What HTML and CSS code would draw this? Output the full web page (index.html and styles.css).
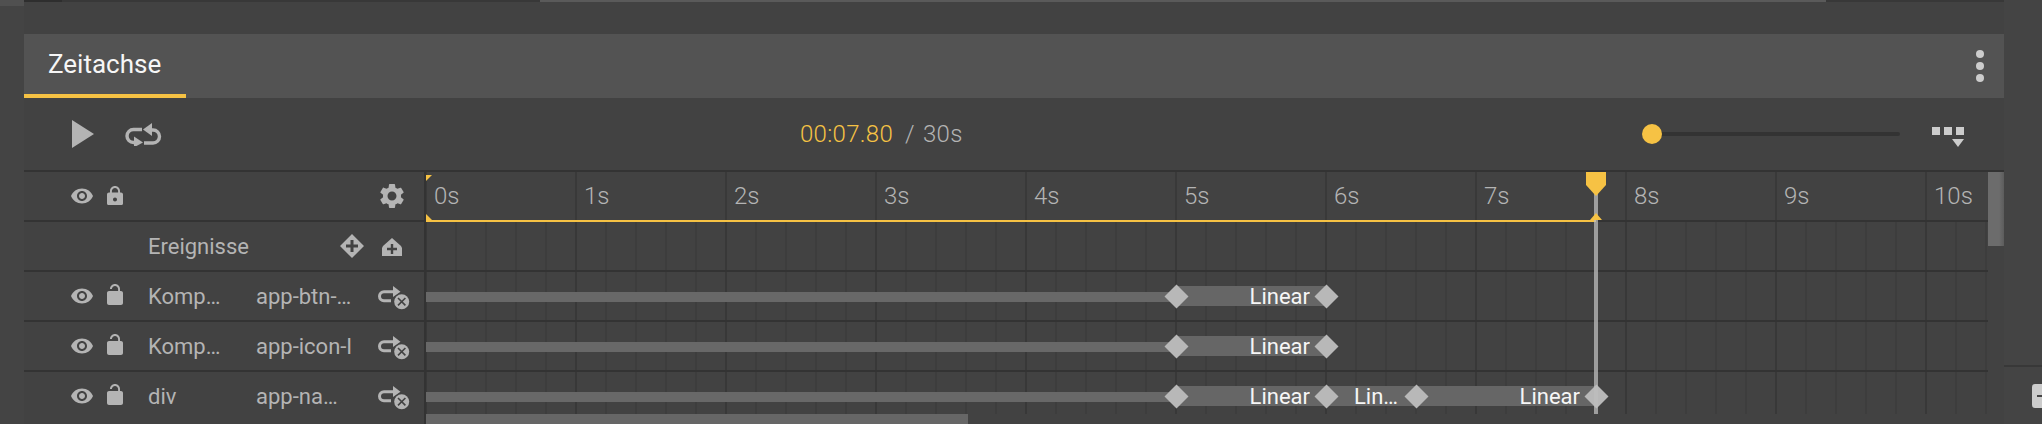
FILE: index.html
```html
<!DOCTYPE html>
<html lang="de">
<head>
  <meta charset="UTF-8" />
  <meta name="viewport" content="width=device-width, initial-scale=1.0" />
  <title>Zeitachse</title>
  <link rel="stylesheet" href="styles.css">
</head>
<body>
  <svg class="defs" width="0" height="0">
    <symbol id="i-eye" viewBox="0 0 24 24"><path d="M12 4.5C7 4.5 2.73 7.61 1 12c1.73 4.39 6 7.5 11 7.5s9.27-3.11 11-7.5c-1.73-4.39-6-7.5-11-7.5zM12 17c-2.76 0-5-2.24-5-5s2.24-5 5-5 5 2.24 5 5-2.24 5-5 5zm0-8c-1.66 0-3 1.34-3 3s1.34 3 3 3 3-1.34 3-3-1.34-3-3-3z"/></symbol>
    <symbol id="i-lock" viewBox="0 0 24 24"><path d="M18 9.500h-1V8c0-2.76-2.24-5-5-5S7 5.240 7 8v1.500H6c-1.1 0-2 .9-2 2v9c0 1.1.9 1.500 2 1.500h12c1.100 0 2-.4 2-1.500v-9c0-1.100-.9-2-2-2zm-6 9c-1.100 0-2-.9-2-2s.9-2 2-2 2 .9 2 2-.9 2-2 2zm3.100-9H8.900V8c0-1.710 1.390-3.100 3.100-3.100 1.710 0 3.100 1.390 3.100 3.100v1.500z"/></symbol>
    <symbol id="i-unlock" viewBox="0 0 24 24"><path d="M12 17c1.100 0 2-.9 2-2s-.9-2-2-2-2 .9-2 2 .9 2 2 2zm6-9h-1V6c0-2.760-2.240-5-5-5S7 3.240 7 6h1.900c0-1.710 1.390-3.100 3.100-3.100 1.710 0 3.100 1.390 3.100 3.100v2H6c-1.100 0-2 .9-2 2v10c0 1.100.9 2 2 2h12c1.100 0 2-.9 2-2V10c0-1.100-.9-2-2-2z"/></symbol>
    <symbol id="i-remove" viewBox="0 0 34 26">
      <path d="M18 6.700H8a4.500 4.500 0 0 0 0 9h7" fill="none" stroke="currentColor" stroke-width="3"/>
      <path d="M17 1l7.500 5.700-7.500 5.300z"/>
      <circle cx="25.700" cy="16.700" r="8.500" fill="#424242"/>
      <circle cx="25.700" cy="16.700" r="7.500"/>
      <path d="M22 13l7.400 7.400M29.400 13L22 20.400" stroke="#424242" stroke-width="1.600"/>
    </symbol>
  </svg>

  <div class="page">
    <div class="gutter gutter-left"></div>

    <main class="panel">
      <div class="topbar">
        <span class="topbar-start"></span>
        <span class="topbar-thumb"></span>
      </div>

      <header class="tabs">
        <div class="tab">Zeitachse</div>
        <div class="dots"><i></i><i></i><i></i></div>
      </header>

      <div class="toolbar">
        <svg class="play" viewBox="0 0 22 28"><path d="M0 0l22 14L0 28z"/></svg>
        <svg class="loop" viewBox="0 0 38 25">
          <path d="M18 7.500H9.500a6.500 6.500 0 0 0 0 13H11" fill="none" stroke="currentColor" stroke-width="3.400"/>
          <path d="M10 14.500l9 6-6.500 3.500-2.500 0z"/>
          <path d="M20 21h9a6.500 6.500 0 0 0 0-13h-2" fill="none" stroke="currentColor" stroke-width="3.400"/>
          <path d="M28 1l-9 6.500 9 6.500z"/>
        </svg>
        <div class="time">
          <span class="time-now">00:07.80</span>
          <span class="time-sep">/</span>
          <span class="time-total">30s</span>
        </div>
        <div class="zoom-slider"><span class="zoom-thumb"></span></div>
        <svg class="view-menu" viewBox="0 0 32 20">
          <path d="M0 0h8v8H0zM12 0h8v8h-8zM24 0h8v8h-8zM20 12h12l-6 8z"/>
        </svg>
      </div>

      <div class="table">
        <div class="rows">
          <div class="row">
            <div class="side">
              <svg class="ic-eye"><use href="#i-eye"/></svg>
              <svg class="ic-lock"><use href="#i-lock"/></svg>
              <svg class="ic-gear" viewBox="0 0 24 24"><path d="M19.140 12.940c.04-.3.06-.61.06-.94 0-.32-.02-.64-.07-.94l2.030-1.580c.18-.14.23-.41.12-.61l-1.920-3.320c-.12-.22-.37-.29-.59-.22l-2.390.96c-.5-.38-1.030-.7-1.620-.94l-.36-2.540c-.04-.24-.24-.41-.48-.41h-3.840c-.24 0-.43.17-.47.41l-.36 2.540c-.59.24-1.130.57-1.620.94l-2.390-.96c-.22-.08-.47 0-.59.22L2.740 8.870c-.12.21-.08.47.12.61l2.030 1.580c-.05.3-.09.63-.09.94s.02.64.07.94l-2.030 1.580c-.18.14-.23.41-.12.61l1.920 3.320c.12.22.37.29.59.22l2.390-.96c.5.38 1.030.7 1.620.94l.36 2.540c.05.24.24.41.48.41h3.840c.24 0 .44-.17.47-.41l.36-2.540c.59-.24 1.130-.56 1.620-.94l2.390.96c.22.08.47 0 .59-.22l1.920-3.320c.12-.22.07-.47-.12-.61l-2.010-1.580zM12 15.600c-1.980 0-3.600-1.620-3.600-3.600s1.620-3.600 3.600-3.600 3.600 1.620 3.600 3.600-1.620 3.600-3.600 3.600z"/></svg>
            </div>
            <div class="ruler">
              <span>0s</span><span>1s</span><span>2s</span><span>3s</span><span>4s</span><span>5s</span><span>6s</span><span>7s</span><span>8s</span><span>9s</span><span>10s</span>
            </div>
          </div>

          <div class="row">
            <div class="side side-events">
              <span class="events-label">Ereignisse</span>
              <svg class="ic-add-key" viewBox="0 0 24 24"><path fill-rule="evenodd" d="M12 0l12 12-12 12L0 12zM10.500 6v4.500H6v3h4.500V18h3v-4.500H18v-3h-4.500V6z"/></svg>
              <svg class="ic-add-event" viewBox="0 0 20 18"><path fill-rule="evenodd" d="M10 0l9 8 1 2v8H0v-8l1-2zM8.800 6v3.800H5v2.400h3.800V16h2.400v-3.800H15V9.800h-3.800V6z"/></svg>
            </div>
            <div class="lane"></div>
          </div>

          <div class="row">
            <div class="side">
              <svg class="ic-eye"><use href="#i-eye"/></svg>
              <svg class="ic-lock"><use href="#i-unlock"/></svg>
              <span class="name">Komponente</span>
              <span class="sel">app-btn-primary</span>
              <svg class="ic-remove"><use href="#i-remove"/></svg>
            </div>
            <div class="lane">
              <div class="hold"></div>
              <div class="seg" style="left:750px;width:150px"><span>Linear</span></div>
              <i class="key" style="left:750px"></i>
              <i class="key" style="left:900px"></i>
            </div>
          </div>

          <div class="row">
            <div class="side">
              <svg class="ic-eye"><use href="#i-eye"/></svg>
              <svg class="ic-lock"><use href="#i-unlock"/></svg>
              <span class="name">Komponente</span>
              <span class="sel">app-icon-l</span>
              <svg class="ic-remove"><use href="#i-remove"/></svg>
            </div>
            <div class="lane">
              <div class="hold"></div>
              <div class="seg" style="left:750px;width:150px"><span>Linear</span></div>
              <i class="key" style="left:750px"></i>
              <i class="key" style="left:900px"></i>
            </div>
          </div>

          <div class="row row-last">
            <div class="side">
              <svg class="ic-eye"><use href="#i-eye"/></svg>
              <svg class="ic-lock"><use href="#i-unlock"/></svg>
              <span class="name">div</span>
              <span class="sel">app-name-bar</span>
              <svg class="ic-remove"><use href="#i-remove"/></svg>
            </div>
            <div class="lane">
              <div class="hold"></div>
              <div class="seg" style="left:750px;width:150px"><span>Linear</span></div>
              <div class="seg" style="left:900px;width:90px"><span>Linear</span></div>
              <div class="seg" style="left:990px;width:180px"><span>Linear</span></div>
              <i class="key" style="left:750px"></i>
              <i class="key" style="left:900px"></i>
              <i class="key" style="left:990px"></i>
              <i class="key" style="left:1170px"></i>
            </div>
          </div>

          <div class="hscroll"><span class="hscroll-thumb"></span></div>

          <!-- overlays on the time axis -->
          <i class="marker marker-top"></i>
          <i class="marker marker-bottom"></i>
          <div class="progress"></div>
          <div class="playhead"></div>
          <svg class="playhead-handle" viewBox="0 0 20 24"><path d="M0 0h20v13l-10 11L0 13z"/></svg>
          <svg class="playhead-foot" viewBox="0 0 12 7"><path d="M6 0l6 7H0z"/></svg>
        </div>
        <div class="vscroll"><span class="vscroll-thumb"></span></div>
      </div>
    </main>

    <aside class="gutter gutter-right">
      <div class="gutter-line"></div>
      <div class="zoom-out"><b></b></div>
    </aside>
  </div>
</body>
</html>
```

FILE: styles.css
```css
* {
  margin: 0;
  padding: 0;
  box-sizing: border-box;
}
html, body {
  height: 424px;
  overflow: hidden;
}
body {
  background-color: #444;
  color: #b4b4b4;
  font-family: Roboto, "Liberation Sans", sans-serif;
  font-size: 22px;
}
svg {
  display: block;
  fill: currentColor;
  flex: none;
}
.defs {
  position: absolute;
}
.page {
  display: flex;
  height: 424px;
}

/* side strips */
.gutter {
  background-color: #444;
}
.gutter-left {
  width: 24px;
  border-top: 6px solid #505050;
}
.gutter-right {
  width: 38px;
  overflow: hidden;
}
.gutter-line {
  height: 2px;
  margin-top: 365px;
  background-color: #383838;
}
.zoom-out {
  width: 22px;
  height: 24px;
  margin: 17px 0 0 28px;
  padding: 11px 0 0 5px;
  background-color: #ccc;
  border-radius: 3px;
}
.zoom-out b {
  display: block;
  width: 14px;
  height: 2px;
  background-color: #444;
}

/* panel */
.panel {
  width: 1980px;
  background-color: #424242;
}
.topbar {
  display: flex;
  height: 2px;
  margin-bottom: 32px;
  background-color: #383838;
}
.topbar-start {
  width: 38px;
  background-color: #2e2e2e;
}
.topbar-thumb {
  width: 1286px;
  margin-left: 478px;
  background-color: #5a5a5a;
}
.tabs {
  display: flex;
  justify-content: space-between;
  align-items: center;
  height: 64px;
  background-color: #535353;
}
.tab {
  display: flex;
  align-items: center;
  width: 162px;
  height: 64px;
  padding-left: 24px;
  border-bottom: 4px solid #f6c244;
  color: #f6f6f6;
  font-size: 26px;
}
.dots {
  display: flex;
  flex-direction: column;
  gap: 4px;
  margin-right: 20px;
}
.dots i {
  width: 8px;
  height: 8px;
  border-radius: 50%;
  background-color: #ccc;
}

/* toolbar */
.toolbar {
  display: flex;
  align-items: center;
  height: 74px;
  padding-left: 48px;
  border-bottom: 2px solid #333;
}
.play {
  width: 22px;
  height: 28px;
}
.loop {
  width: 38px;
  height: 25px;
  margin-left: 30px;
}
.time {
  display: flex;
  width: 840px;
  margin-left: 638px;
  font-size: 24px;
  font-weight: 300;
  letter-spacing: 0.3px;
}
.time-now {
  color: #f6c244;
}
.time-sep {
  margin-left: 12px;
}
.time-total {
  margin-left: 8px;
}
.zoom-slider {
  display: flex;
  align-items: center;
  width: 258px;
  height: 4px;
  margin-left: 2px;
  background-color: #333;
  background-clip: content-box;
  padding-left: 10px;
  border-radius: 2px;
}
.zoom-thumb {
  width: 20px;
  height: 20px;
  margin-left: -10px;
  border-radius: 50%;
  background-color: #f6c244;
}
.view-menu {
  width: 32px;
  height: 20px;
  margin: 6px 0 0 32px;
  color: #ccc;
}

/* table */
.table {
  display: flex;
  height: 252px;
}
.rows {
  position: relative;
  width: 1964px;
}
.row {
  display: flex;
  height: 50px;
  border-bottom: 2px solid #333;
}
.row-last {
  height: 42px;
  border-bottom: 0;
}
.row-last .side {
  height: 52px;
  padding-bottom: 4px;
}
.side {
  display: flex;
  align-items: center;
  flex: none;
  width: 402px;
  padding-left: 46px;
  border-right: 2px solid #333;
}
.ic-eye {
  width: 24px;
  height: 24px;
}
.ic-lock {
  width: 24px;
  height: 24px;
  margin: -2px 0 0 9px;
}
.ic-gear {
  width: 30px;
  height: 30px;
  margin-left: 250px;
}
.name {
  flex: none;
  width: 74px;
  margin-left: 21px;
  overflow: hidden;
  white-space: nowrap;
  text-overflow: ellipsis;
}
.sel {
  flex: none;
  width: 96px;
  margin-left: 34px;
  overflow: hidden;
  white-space: nowrap;
  text-overflow: ellipsis;
}
.ic-remove {
  width: 34px;
  height: 26px;
  margin: 4px 0 0 24px;
}
.side-events {
  padding-left: 124px;
}
.events-label {
  width: 192px;
}
.ic-add-key {
  width: 24px;
  height: 24px;
}
.ic-add-event {
  width: 20px;
  height: 18px;
  margin: 2px 0 0 18px;
}
.ruler {
  display: flex;
  flex: 1;
  align-items: center;
  font-size: 24px;
  font-weight: 300;
  background: linear-gradient(90deg, #393939 2px, transparent 2px) -1px 0 / 150px 100%;
}
.ruler span {
  flex: none;
  width: 150px;
  padding-left: 8px;
}
.lane {
  position: relative;
  flex: 1;
  background:
    linear-gradient(90deg, #383838 2px, transparent 2px) -1px 0 / 150px 100%,
    linear-gradient(90deg, #3d3d3d 2px, transparent 2px) -1px 0 / 30px 100%;
}
.hold {
  position: absolute;
  left: 0;
  top: 20px;
  width: 750px;
  height: 10px;
  background-color: #686868;
}
.seg {
  position: absolute;
  top: 14px;
  height: 20px;
  display: flex;
  justify-content: flex-end;
  align-items: center;
  padding: 0 16px 0 28px;
  background-color: #666;
  color: #f6f6f6;
}
.seg span {
  overflow: hidden;
  white-space: nowrap;
  text-overflow: ellipsis;
}
.key {
  position: absolute;
  top: 16px;
  width: 17px;
  height: 17px;
  margin-left: -8.500px;
  background-color: #b8b8b8;
  transform: rotate(45deg);
}
.hscroll {
  height: 10px;
  padding-left: 402px;
}
.hscroll-thumb {
  display: block;
  width: 542px;
  height: 10px;
  background-color: #666;
}
.vscroll {
  width: 16px;
}
.vscroll-thumb {
  display: block;
  height: 74px;
  background: linear-gradient(90deg, #6c6c6c 70%, #5c5c5c);
}

/* overlays */
.marker {
  position: absolute;
  left: 402px;
  width: 6px;
  height: 6px;
  background-color: #f6c244;
}
.marker-top {
  top: 3px;
  clip-path: polygon(0 0, 100% 0, 0 100%);
}
.marker-bottom {
  top: 42px;
  clip-path: polygon(0 0, 100% 100%, 0 100%);
}
.progress {
  position: absolute;
  left: 402px;
  top: 48px;
  width: 1170px;
  height: 2px;
  background-color: #f6c244;
}
.playhead {
  position: absolute;
  left: 1570px;
  top: 0;
  width: 4px;
  height: 242px;
  background-color: rgba(190, 190, 190, 0.75);
}
.playhead-handle {
  position: absolute;
  left: 1562px;
  top: 0;
  width: 20px;
  height: 24px;
  color: #f6c244;
}
.playhead-foot {
  position: absolute;
  left: 1566px;
  top: 41px;
  width: 12px;
  height: 7px;
  color: #f6c244;
}
```
